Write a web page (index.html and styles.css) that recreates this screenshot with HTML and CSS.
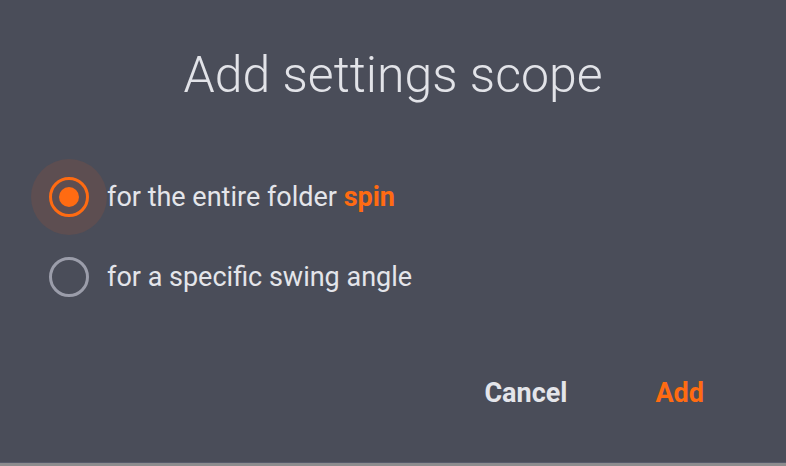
FILE: index.html
```html
<!DOCTYPE html>
<html lang="en">
  <head>
    <meta charset="UTF-8" />
    <meta name="viewport" content="width=device-width, initial-scale=1.0" />
    <link rel="stylesheet" href="styles.css">
    <title>Add settings scope</title>
  </head>
  <body>
    <div class="dialog">
      <h2 class="title">Add settings scope</h2>

      <div class="options">
        <label class="option">
          <span class="radio checked"><span class="dot"></span></span>
          <span class="label">for the entire folder <b class="accent">spin</b></span>
        </label>
        <label class="option">
          <span class="radio"></span>
          <span class="label">for a specific swing angle</span>
        </label>
      </div>

      <div class="actions">
        <button class="btn">Cancel</button>
        <button class="btn primary">Add</button>
      </div>
    </div>
    <div class="bottom-bar"></div>
  </body>
</html>
```

FILE: styles.css
```css
body {
  margin: 0;
  font-family: Roboto, "Liberation Sans", sans-serif;
  background-color: #4a4d59;
  color: #e4e5ea;
}

.dialog {
  height: 462px;
  box-sizing: border-box;
  display: flex;
  flex-direction: column;
}

.title {
  margin: 44px 0 0;
  text-align: center;
  font-size: 50px;
  font-weight: 300;
  line-height: 62px;
  color: #e2e3e8;
}

.options {
  margin-top: 53px;
  display: flex;
  flex-direction: column;
  gap: 4px;
}

.option {
  display: flex;
  align-items: center;
  height: 76px;
  padding-left: 31px;
}

.radio {
  position: relative;
  width: 76px;
  height: 76px;
  display: flex;
  align-items: center;
  justify-content: center;
  flex-shrink: 0;
}

.radio::before {
  content: "";
  width: 34px;
  height: 34px;
  border: 3px solid #9b9daa;
  border-radius: 50%;
}

.radio.checked {
  background-color: #5d4e51;
  border-radius: 50%;
}

.radio.checked::before {
  border-color: #ff6b12;
}

.dot {
  position: absolute;
  top: 28px;
  left: 28px;
  width: 20px;
  height: 20px;
  border-radius: 50%;
  background-color: #ff6b12;
}

.label {
  font-size: 27px;
}

.accent {
  color: #ff6b12;
  font-weight: 700;
}

.actions {
  margin-top: auto;
  margin-bottom: 53px;
  display: flex;
  justify-content: flex-end;
  gap: 88px;
  padding-right: 82px;
}

.btn {
  font-family: Roboto, "Liberation Sans", sans-serif;
  font-size: 27px;
  font-weight: 700;
  background: none;
  border: none;
  padding: 0;
  color: #e4e5ea;
}

.btn.primary {
  color: #ff6b12;
}

.bottom-bar {
  height: 4px;
  background-color: #8c8c8e;
  border-top: 1px solid #565a6a;
}
```
